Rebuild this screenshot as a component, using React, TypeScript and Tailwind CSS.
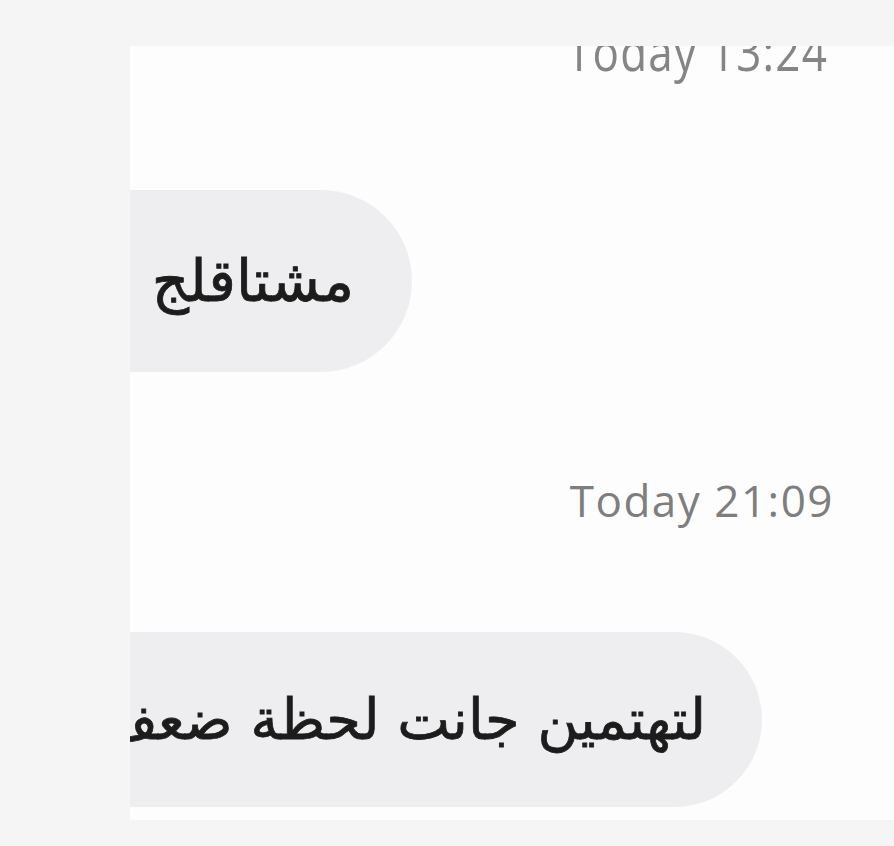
import React from "react";

export default function App() {
  return (
    <div className="w-[894px] h-[846px] bg-[#f5f5f6] overflow-hidden flex flex-col">
      <div className="h-[46px] shrink-0" />
      <div className="ml-[130px] h-[774px] bg-[#fdfdfe] overflow-hidden flex flex-col">
        <div
          className="flex justify-end pr-[66px] -mt-[16px] h-[52px] text-[#858585] text-[44px] leading-[52px] tracking-[1.2px]"
          style={{ fontFamily: '"Open Sans", sans-serif' }}
        >
          <span className="inline-block scale-y-[1.2] origin-bottom">Today 13:24</span>
        </div>
        <div className="mt-[108px] w-[282px] h-[182px] bg-[#eeeef0] rounded-r-[91px] flex items-center justify-end pr-[58px]">
          <span
            dir="rtl"
            className="text-[#1c1c1c] text-[58px] leading-none"
            style={{ fontFamily: '"DejaVu Sans", "Noto Sans", sans-serif', WebkitTextStroke: "0.8px #1c1c1c" }}
          >
            مشتاقلج
          </span>
        </div>
        <div
          className="mt-[102px] flex justify-end pr-[60px] h-[52px] text-[#7e7e7e] text-[44px] leading-[52px] tracking-[1.5px]"
          style={{ fontFamily: '"Open Sans", sans-serif' }}
        >
          Today 21:09
        </div>
        <div className="mt-[106px] w-[632px] h-[175px] bg-[#eeeef0] rounded-r-[88px] flex items-center justify-end pr-[56px] overflow-hidden">
          <span
            dir="rtl"
            className="whitespace-nowrap text-[#1c1c1c] text-[56px] leading-none"
            style={{ fontFamily: '"DejaVu Sans", "Noto Sans", sans-serif', WebkitTextStroke: "0.8px #1c1c1c" }}
          >
            لتهتمين جانت لحظة ضعف
          </span>
        </div>
      </div>
    </div>
  );
}
